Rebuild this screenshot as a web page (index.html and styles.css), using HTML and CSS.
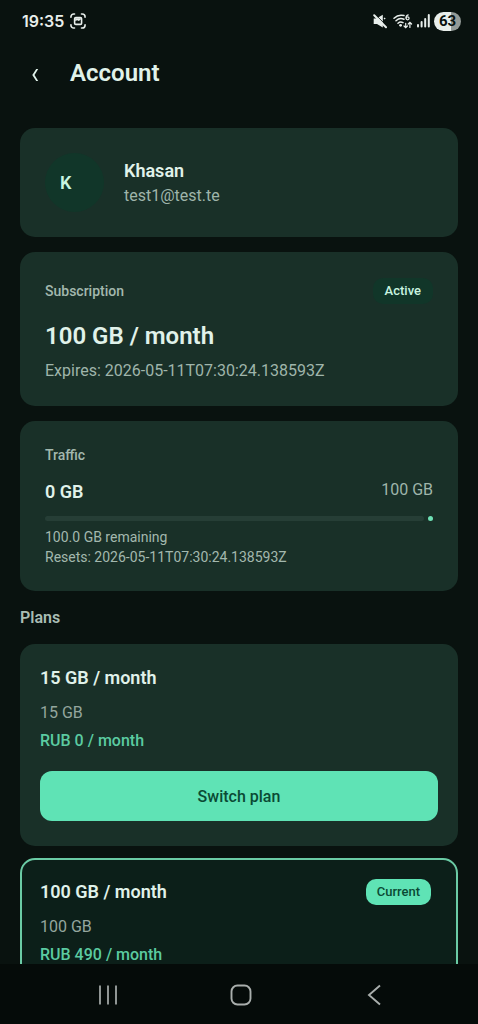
FILE: index.html
```html
<!DOCTYPE html>
<html lang="en">
<head>
<meta charset="utf-8">
<meta name="viewport" content="width=device-width, initial-scale=1">
<title>Account</title>
<link rel="stylesheet" href="styles.css">
</head>
<body>
<div class="screen">
  <div class="status">
    <div class="status-side">
      <span class="clock">19:35</span>
      <svg class="capture-icon" width="16" height="16" viewBox="0 0 17 17" fill="none" stroke="currentColor" stroke-width="1.7" stroke-linecap="round" aria-hidden="true">
        <path d="M1 4.5V4a3 3 0 0 1 3-3h.8M12.2 1h.8a3 3 0 0 1 3 3v.5M16 12.5v.5a3 3 0 0 1-3 3h-.8M4.8 16H4a3 3 0 0 1-3-3v-.5"/>
        <rect x="4.9" y="4.9" width="7.4" height="7.2" rx="1.3"/>
        <path d="M5.5 8.6V5.5h6v1.3L9.4 8.4l-1.6-.8z" fill="currentColor" stroke="none"/>
      </svg>
    </div>
    <div class="status-side">
      <svg class="mute-icon" width="14" height="15" viewBox="0 0 14 15" aria-hidden="true">
        <path d="M.7 4.6h2.8L9.8.8v12.7L4 9.9H.7z" fill="currentColor"/>
        <path d="M11 5l1.2-1" stroke="currentColor" stroke-width="1.4"/>
        <path d="M2.4.6l11 11" stroke="#09120f" stroke-width="1"/>
        <path d="M1.2 1.2l11.8 12" stroke="currentColor" stroke-width="2" stroke-linecap="round"/>
      </svg>
      <svg class="wifi-icon" width="20" height="15" viewBox="0 0 20 15" fill="none" stroke="currentColor" stroke-width="1.5" stroke-linecap="round" aria-hidden="true">
        <path d="M1 4.2C4 1.3 7.6.7 11 1.6M3 6.7c2.3-2.1 5.3-2.6 8-1.4M5 9.2c1.5-1.3 3.3-1.5 5-.5"/>
        <circle cx="7.6" cy="11.3" r="1.4" fill="currentColor" stroke="none"/>
        <path d="M15.2.8c-1.5.4-2.2 1.7-2.2 3.1" stroke-width="1.2"/>
        <circle cx="14.6" cy="4.3" r="1.5" stroke-width="1.2"/>
        <path d="M12.7 9.3v4.2M11 12l1.7 1.7 1.7-1.7M16.9 13.5V8.3M15.2 10l1.7-1.7 1.7 1.7" stroke-width="1.2"/>
      </svg>
      <svg width="13" height="14" viewBox="0 0 13 14" fill="currentColor" aria-hidden="true">
        <rect x="0" y="10" width="2" height="3.5" rx="1"/><rect x="3.6" y="7" width="2" height="6.5" rx="1"/><rect x="7.2" y="4" width="2" height="9.5" rx="1"/><rect x="10.8" y="0" width="2" height="13.5" rx="1"/>
      </svg>
      <span class="battery">63</span>
    </div>
  </div>

  <header class="appbar">
    <button class="back" type="button" aria-label="Go back">
      <svg width="8" height="14" viewBox="0 0 8 14" aria-hidden="true"><path d="M5.2 1h2L3.5 7l3.7 6h-2L1.3 7z" fill="currentColor"/></svg>
    </button>
    <h1 class="title">Account</h1>
  </header>

  <main class="content">
    <section class="card profile">
      <div class="avatar">K</div>
      <div>
        <h2 class="heading">Khasan</h2>
        <p class="body-text email">test1@test.te</p>
      </div>
    </section>

    <section class="card">
      <div class="row">
        <h2 class="label">Subscription</h2>
        <span class="badge badge-active">Active</span>
      </div>
      <p class="plan-now">100 GB / month</p>
      <p class="body-text">Expires: 2026-05-11T07:30:24.138593Z</p>
    </section>

    <section class="card">
      <h2 class="label">Traffic</h2>
      <div class="usage">
        <strong class="heading">0 GB</strong>
        <span class="body-text">100 GB</span>
      </div>
      <div class="meter" role="progressbar" aria-label="Traffic used" aria-valuenow="0" aria-valuemin="0" aria-valuemax="100"><span class="meter-track"></span><span class="meter-stop"></span></div>
      <div class="notes">
        <p class="note">100.0 GB remaining</p>
        <p class="note">Resets: 2026-05-11T07:30:24.138593Z</p>
      </div>
    </section>

    <h2 class="section-title">Plans</h2>

    <div class="plans">
      <article class="plan">
        <div class="row"><h3 class="heading">15 GB / month</h3></div>
        <p class="quota">15 GB</p>
        <p class="price">RUB 0 / month</p>
        <button class="switch" type="button">Switch plan</button>
      </article>
      <article class="plan plan-current">
        <div class="row"><h3 class="heading">100 GB / month</h3><span class="badge badge-current">Current</span></div>
        <p class="quota">100 GB</p>
        <p class="price">RUB 490 / month</p>
      </article>
    </div>
  </main>

  <nav class="navbar" aria-label="System">
    <button class="nav-button" type="button" aria-label="Recents">
      <svg width="22" height="22" viewBox="0 0 22 22" fill="none" stroke="currentColor" stroke-width="1.7"><path d="M3 1.5v19M11 1.5v19M19 1.5v19"/></svg>
    </button>
    <button class="nav-button" type="button" aria-label="Home">
      <svg width="22" height="22" viewBox="0 0 22 22" fill="none" stroke="currentColor" stroke-width="1.9"><rect x="1.5" y="1.5" width="19" height="19" rx="6"/></svg>
    </button>
    <button class="nav-button" type="button" aria-label="Back">
      <svg width="22" height="22" viewBox="0 0 22 22" fill="none" stroke="currentColor" stroke-width="1.9"><path d="M17 1.5L6 11l11 9.5"/></svg>
    </button>
  </nav>
</div>
</body>
</html>
```
FILE: styles.css
```css
* { box-sizing: border-box; }

body {
  margin: 0;
  background: #09120f;
  color: #e0f2ea;
  font-family: Roboto, "Liberation Sans", sans-serif;
  font-size: 16px;
}

h1, h2, h3, p { margin: 0; }
button { border: 0; padding: 0; font: inherit; color: inherit; background: none; cursor: pointer; }
svg { display: block; }

.screen { display: flex; flex-direction: column; height: 100vh; overflow: hidden; }

.status {
  display: flex;
  flex: none;
  justify-content: space-between;
  align-items: center;
  height: 42px;
  padding: 0 17px 0 22px;
  color: #e8eeeb;
}
.status-side { display: flex; align-items: center; gap: 4px; }
.clock { margin-right: 2px; font: 600 16px/20px Inter, Roboto, sans-serif; }
.mute-icon { margin-right: 2px; }
.battery {
  width: 27px;
  border-radius: 10px;
  background: linear-gradient(90deg, #e8eeeb 62%, #949b98 62%);
  color: #09120f;
  font: 700 15px/19px Roboto, sans-serif;
  text-align: center;
}

.appbar { display: flex; flex: none; align-items: center; height: 62px; padding: 0 20px; gap: 20px; }
.back { display: grid; place-items: center; width: 30px; height: 40px; padding-top: 3px; }
.title { font-size: 24px; font-weight: 600; line-height: 32px; }

.content {
  display: flex;
  flex: 1;
  flex-direction: column;
  gap: 15px;
  min-height: 0;
  padding: 24px 20px 0;
  overflow: hidden;
}
.content > * { flex: none; }

.card { padding: 25px; border-radius: 15px; background: #193028; }
.profile { display: flex; align-items: center; gap: 20px; }
.avatar {
  width: 59px;
  padding-left: 15px;
  border-radius: 50%;
  background: #113629;
  color: #c8f5e0;
  font-size: 18px;
  font-weight: 600;
  line-height: 59px;
}
.heading { font-size: 18px; font-weight: 600; line-height: 26px; }
.body-text { color: #9fb5ab; font-size: 16px; line-height: 21px; }
.email { line-height: 24px; }

.row { display: flex; align-items: center; justify-content: space-between; height: 27px; }
.label { color: #a3b8ae; font-size: 14px; font-weight: 500; line-height: 18px; }
.badge { border-radius: 10px; font-size: 13px; font-weight: 500; line-height: 26px; }
.badge-active { padding: 0 12px; background: #113629; color: #c8f5e0; }
.badge-current { margin-right: 7px; padding: 0 11px; background: #5fe3b5; color: #0a4a34; }
.plan-now { margin: 17px 0 9px; font-size: 24px; font-weight: 600; line-height: 30px; }

.usage { display: flex; align-items: flex-start; justify-content: space-between; margin: 15px 0 11px; }
.meter { display: flex; gap: 4px; height: 5px; }
.meter-track { flex: 1; border-radius: 3px; background: #263e36; }
.meter-stop { width: 5px; border-radius: 50%; background: #6fe0b5; }
.notes { display: grid; gap: 2px; margin-top: 7px; }
.note { color: #a3b8ae; font-size: 14px; line-height: 18px; }

.section-title { color: #a9bdb4; font-size: 16px; font-weight: 600; line-height: 23px; }

.plans { display: grid; gap: 12px; }
.plan { padding: 20px 20px 25px; border-radius: 15px; background: #193028; }
.plan-current { padding: 18px 18px 23px; border: 2px solid #6bcba5; background: #0c1f19; }
.quota { margin-top: 12px; color: #94a69e; font-size: 16px; line-height: 20px; }
.price { margin-top: 8px; color: #5bcba1; font-size: 16px; font-weight: 500; line-height: 20px; }
.switch {
  display: block;
  width: 100%;
  height: 50px;
  margin-top: 20px;
  border-radius: 12px;
  background: #5fe3b5;
  color: #0a4a34;
  font-size: 16px;
  font-weight: 500;
}

.navbar {
  display: flex;
  flex: none;
  align-items: center;
  height: 60px;
  padding: 2px 37px 0 41px;
  background: #050b09;
  color: #a9aeac;
}
.nav-button { display: grid; flex: 1; place-items: center; height: 48px; }
```
